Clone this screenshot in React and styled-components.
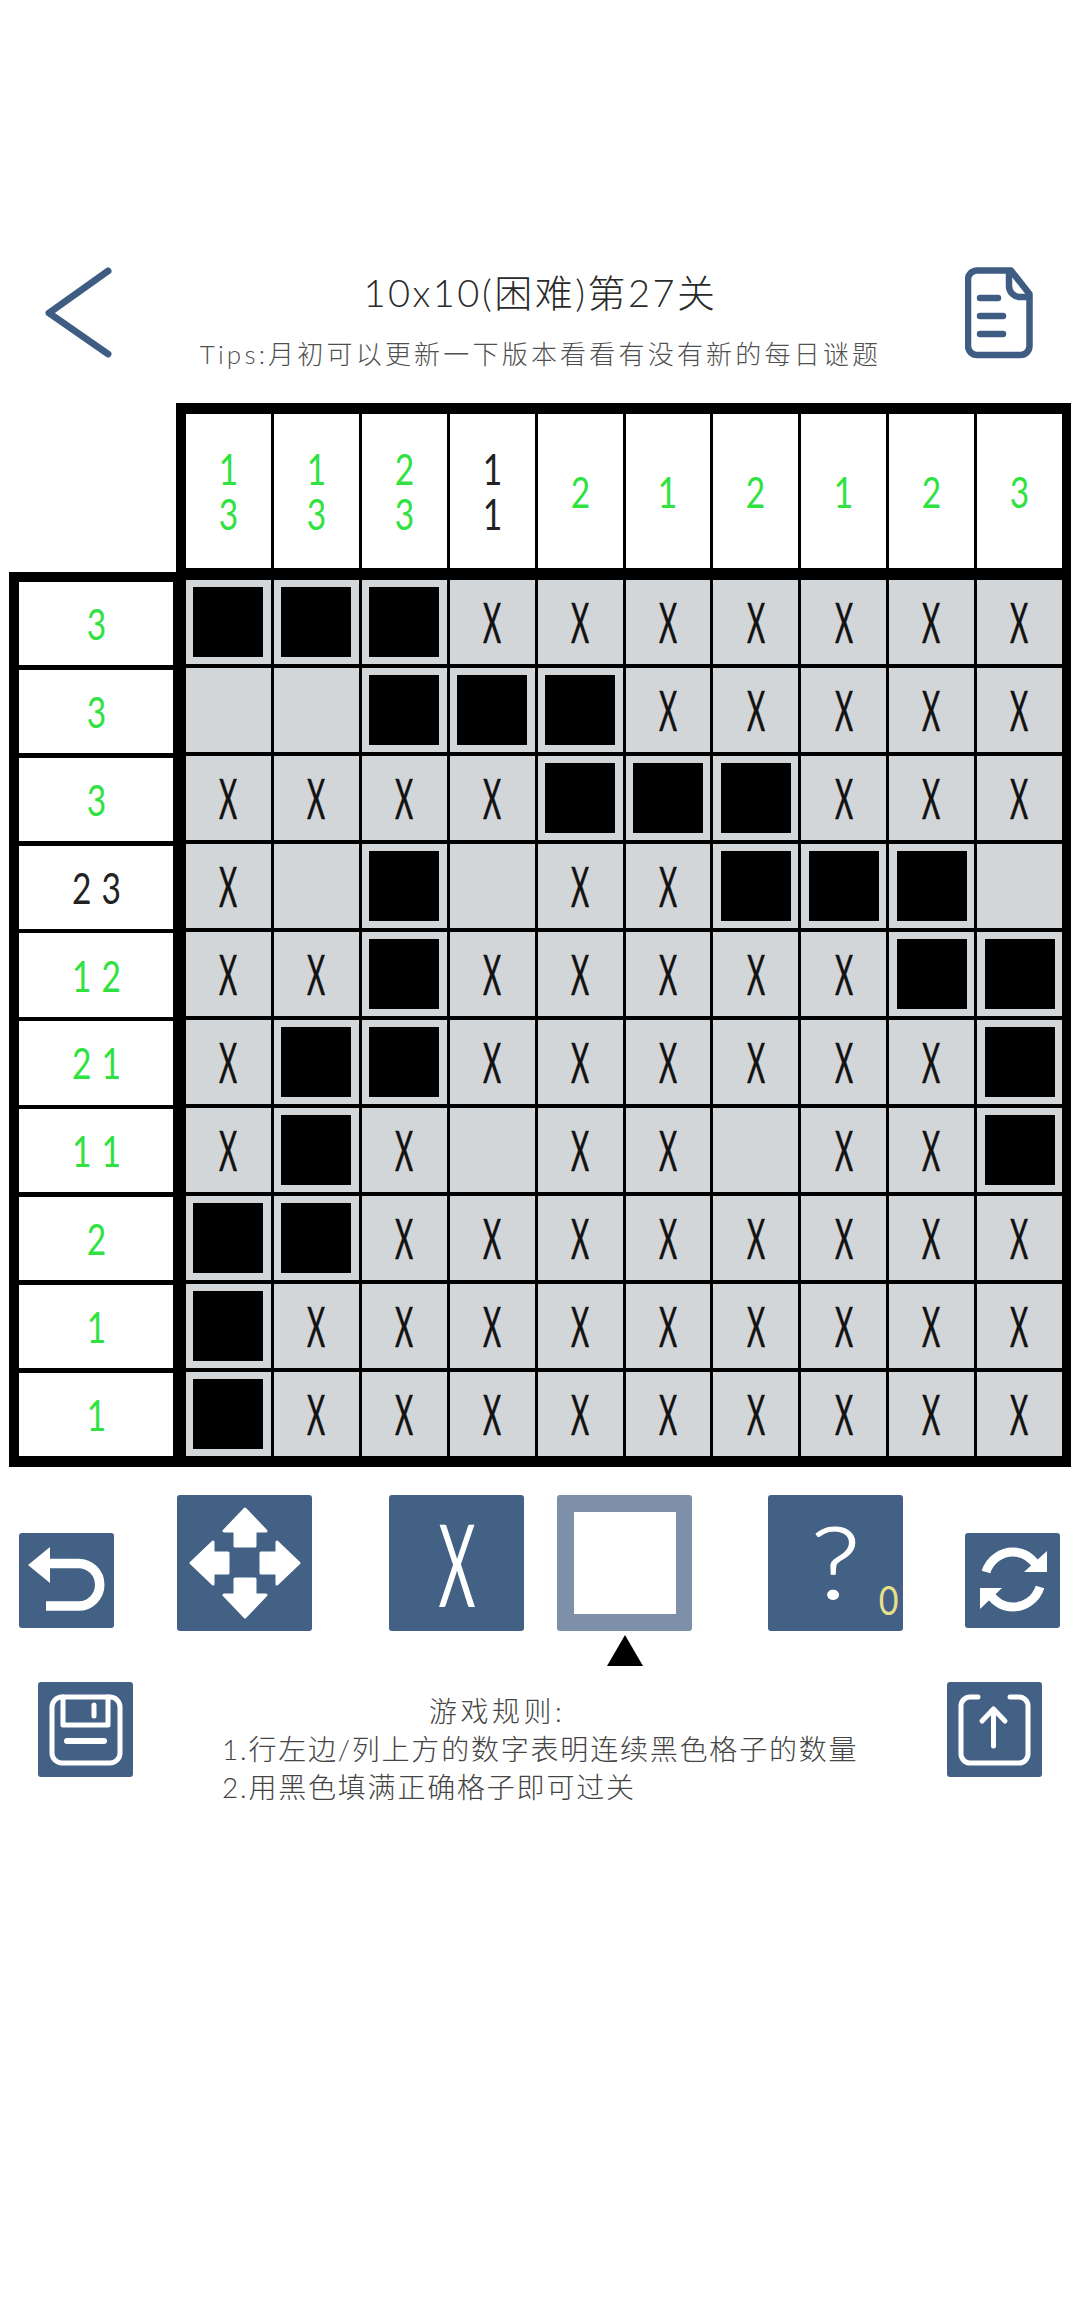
import React from "react";
import styled, { createGlobalStyle } from "styled-components";

const BLUE = "#436085";
const GREEN = "#2fe23f";
const LATIN = `"Lato", "Noto Sans", sans-serif`;
const HAND = `"Lato", "Noto Sans CJK SC", sans-serif`;

const topClues = [
  { nums: [1, 3], done: true },
  { nums: [1, 3], done: true },
  { nums: [2, 3], done: true },
  { nums: [1, 1], done: false },
  { nums: [2], done: true },
  { nums: [1], done: true },
  { nums: [2], done: true },
  { nums: [1], done: true },
  { nums: [2], done: true },
  { nums: [3], done: true },
];

const leftClues = [
  { text: "3", done: true },
  { text: "3", done: true },
  { text: "3", done: true },
  { text: "2 3", done: false },
  { text: "1 2", done: true },
  { text: "2 1", done: true },
  { text: "1 1", done: true },
  { text: "2", done: true },
  { text: "1", done: true },
  { text: "1", done: true },
];

const board = [
  "BBBXXXXXXX",
  "__BBBXXXXX",
  "XXXXBBBXXX",
  "X_B_XXBBB_",
  "XXBXXXXXBB",
  "XBBXXXXXXB",
  "XBX_XX_XXB",
  "BBXXXXXXXX",
  "BXXXXXXXXX",
  "BXXXXXXXXX",
];

const GlobalStyle = createGlobalStyle`
  html, body {
    margin: 0;
    padding: 0;
    background: #fff;
  }
`;

const Page = styled.div`
  width: 1080px;
  height: 2310px;
  padding-top: 267px;
  box-sizing: border-box;
  overflow: hidden;
`;

const Header = styled.header`
  height: 136px;
  display: flex;
  align-items: flex-start;
  padding: 0 47px 0 45px;
  box-sizing: border-box;
`;

const HeaderText = styled.div`
  flex: 1;
  padding-left: 4px;
  display: flex;
  flex-direction: column;
  align-items: center;
  color: #2a2a2a;
`;

const Title = styled.h1`
  margin: 0;
  height: 70px;
  font: 300 38px/50px ${HAND};
  letter-spacing: 2.5px;
  white-space: nowrap;
`;

const Tips = styled.div`
  font: 300 26px/34px ${HAND};
  letter-spacing: 3.2px;
  color: #505050;
  white-space: nowrap;
`;

const Board = styled.section`
  width: 1062px;
  margin-left: 9px;
`;

const TopClues = styled.div`
  margin-left: 167px;
  height: 169px;
  box-sizing: border-box;
  padding: 11px 9px 4px 10px;
  background: #000;
  display: grid;
  grid-template-columns: repeat(10, 1fr);
  column-gap: 3px;
`;

const TopCell = styled.div`
  background: #fff;
  display: flex;
  flex-direction: column;
  align-items: center;
  justify-content: center;
  color: ${(p) => (p.$done ? GREEN : "#222")};
  font: 400 43px/45px ${LATIN};
`;

const Digit = styled.span`
  display: block;
  transform: scaleX(0.78);
`;

const BoardBody = styled.div`
  display: flex;
  height: 895px;
`;

const LeftClues = styled.div`
  width: 177px;
  box-sizing: border-box;
  padding: 10px 13px 11px 10px;
  background: #000;
  display: grid;
  grid-template-rows: repeat(10, 1fr);
  row-gap: 4.4px;
`;

const LeftCell = styled.div`
  background: #fff;
  display: flex;
  align-items: center;
  justify-content: center;
  color: ${(p) => (p.$done ? GREEN : "#222")};
  font: 400 43px/1 ${LATIN};
  white-space: pre;
  word-spacing: 2px;
`;

const Grid = styled.div`
  flex: 1;
  box-sizing: border-box;
  padding: 8px 9px 11px 0;
  background: #000;
  display: grid;
  grid-template-columns: repeat(10, 1fr);
  grid-template-rows: repeat(10, 1fr);
  column-gap: 3px;
  row-gap: 4.4px;
`;

const Cell = styled.div`
  background: #d3d6d8;
  display: flex;
  align-items: center;
  justify-content: center;
`;

const Fill = styled.div`
  width: 70px;
  height: 70px;
  background: #000;
`;

const Cross = styled.span`
  display: block;
  font: 400 56px/1 ${LATIN};
  color: #111;
  -webkit-text-stroke: 0.6px #111;
  transform: scaleX(0.5);
`;

const Tools = styled.div`
  margin-top: 28px;
  padding-left: 19px;
  display: flex;
  align-items: flex-start;
`;

const Button = styled.div`
  position: relative;
  flex: none;
  width: ${(p) => (p.$big ? 135 : 95)}px;
  height: ${(p) => (p.$big ? 136 : 95)}px;
  margin-left: ${(p) => p.$left || 0}px;
  margin-top: ${(p) => p.$top || 0}px;
  background: ${BLUE};
  border-radius: 3px;
  display: flex;
  align-items: center;
  justify-content: center;
  color: #fff;

  svg {
    display: block;
  }
`;

const BigCross = styled.span`
  font: 400 114px/1 ${LATIN};
  transform: scaleX(0.5);
`;

const Question = styled.span`
  font: 300 100px/1 ${LATIN};
  -webkit-text-stroke: 1px #fff;
  transform: translateY(-3px) scaleX(1.15);
`;

const HintCount = styled.span`
  position: absolute;
  right: 3px;
  bottom: 11px;
  font: 400 40px/1 ${LATIN};
  color: #e8e08a;
  transform: scaleX(0.85);
`;

const Selected = styled.div`
  flex: none;
  margin-left: 33px;
  width: 135px;
  display: flex;
  flex-direction: column;
  align-items: center;
`;

const BlankButton = styled.div`
  width: 135px;
  height: 136px;
  border-radius: 3px;
  background: #7d8fa9;
  display: flex;
  align-items: center;
  justify-content: center;
`;

const BlankInner = styled.div`
  width: 102px;
  height: 102px;
  background: #fff;
`;

const Pointer = styled.div`
  margin-top: 4px;
  width: 0;
  height: 0;
  border-left: 18px solid transparent;
  border-right: 18px solid transparent;
  border-bottom: 31px solid #000;
`;

const Footer = styled.div`
  margin-top: 16px;
  padding: 0 38px;
  display: flex;
  align-items: flex-start;
`;

const Rules = styled.div`
  margin-left: 89px;
  padding-top: 10px;
  flex: 1;
  font: 300 28px/38px ${HAND};
  letter-spacing: 1.8px;
  color: #444;
  white-space: nowrap;
`;

const RulesTitle = styled.div`
  margin-left: 207px;
  letter-spacing: 3.5px;
`;

const BackIcon = () => (
  <svg width="67" height="91" viewBox="0 0 67 91" fill="none" stroke="#3f5d82" strokeWidth="7" strokeLinecap="round" strokeLinejoin="round">
    <polyline points="63,4 4,46 63,87" />
  </svg>
);

const DocIcon = () => (
  <svg width="68" height="92" viewBox="0 0 68 92" fill="none" stroke="#3f5d82" strokeWidth="6.5" strokeLinecap="round" strokeLinejoin="round">
    <path d="M12 3.5H46L64.5 27V79a9 9 0 0 1-9 9H12a9 9 0 0 1-9-9V12.5a9 9 0 0 1 9-9Z" />
    <path d="M44 4V19a11 11 0 0 0 11 11H64" />
    <path d="M15 31H33M15 49H38M15 67H38" />
  </svg>
);

const UndoIcon = () => (
  <svg width="95" height="95" viewBox="0 0 95 95" fill="none">
    <polygon points="9,32 31,14 31,50" fill="#fff" />
    <path d="M29 30.5H59.5A21.25 21.25 0 0 1 59.5 73H27" stroke="#fff" strokeWidth="9.5" />
  </svg>
);

const MoveIcon = () => (
  <svg width="135" height="136" viewBox="0 0 135 136" fill="#fff" stroke="#fff" strokeWidth="3" strokeLinejoin="round">
    <polygon points="68,14 47,36 58,36 58,51 78,51 78,36 89,36" />
    <polygon points="68,122 47,100 58,100 58,84 78,84 78,100 89,100" />
    <polygon points="14,68 36,47 36,58 51,58 51,78 36,78 36,89" />
    <polygon points="122,68 100,47 100,58 84,58 84,78 100,78 100,89" />
  </svg>
);

const RefreshIcon = () => (
  <svg width="95" height="95" viewBox="0 0 95 95">
    <g fill="none" stroke="#fff" strokeWidth="9">
      <path d="M21 39C25 26 37 19 48 19C58 19 66 24 72 33" />
      <path d="M75 54C71 67 59 74 48 74C38 74 30 69 24 60" />
    </g>
    <polygon points="82,18 82,39 59,39" fill="#fff" />
    <polygon points="15,76 15,55 37,55" fill="#fff" />
  </svg>
);

const SaveIcon = () => (
  <svg width="95" height="95" viewBox="0 0 95 95" fill="none" stroke="#fff" strokeWidth="5" strokeLinecap="round" strokeLinejoin="round">
    <rect x="14" y="15" width="68" height="66" rx="10" />
    <path d="M25 15V43H70V15" />
    <path d="M56 23V34" strokeWidth="5" />
    <path d="M29 59H66" strokeWidth="6" />
  </svg>
);

const UploadIcon = () => (
  <svg width="95" height="95" viewBox="0 0 95 95" fill="none" stroke="#fff" strokeWidth="5" strokeLinecap="round" strokeLinejoin="round">
    <path d="M31 15H23A9 9 0 0 0 14 24V72A9 9 0 0 0 23 81H72A9 9 0 0 0 81 72V24A9 9 0 0 0 72 15H63" />
    <path d="M46.5 64V28M35 39L46.5 27L58 39" />
  </svg>
);

export default function App() {
  return (
    <Page>
      <GlobalStyle />
      <Header>
        <BackIcon />
        <HeaderText>
          <Title>10x10(困难)第27关</Title>
          <Tips>Tips:月初可以更新一下版本看看有没有新的每日谜题</Tips>
        </HeaderText>
        <DocIcon />
      </Header>

      <Board>
        <TopClues>
          {topClues.map((clue, i) => (
            <TopCell key={i} $done={clue.done}>
              {clue.nums.map((n, j) => (
                <Digit key={j}>{n}</Digit>
              ))}
            </TopCell>
          ))}
        </TopClues>
        <BoardBody>
          <LeftClues>
            {leftClues.map((clue, i) => (
              <LeftCell key={i} $done={clue.done}>
                <Digit>{clue.text}</Digit>
              </LeftCell>
            ))}
          </LeftClues>
          <Grid>
            {board.join("").split("").map((c, i) => (
              <Cell key={i}>
                {c === "B" && <Fill />}
                {c === "X" && <Cross>X</Cross>}
              </Cell>
            ))}
          </Grid>
        </BoardBody>
      </Board>

      <Tools>
        <Button $top={38}>
          <UndoIcon />
        </Button>
        <Button $big $left={63}>
          <MoveIcon />
        </Button>
        <Button $big $left={77}>
          <BigCross>X</BigCross>
        </Button>
        <Selected>
          <BlankButton>
            <BlankInner />
          </BlankButton>
          <Pointer />
        </Selected>
        <Button $big $left={76}>
          <Question>?</Question>
          <HintCount>0</HintCount>
        </Button>
        <Button $top={38} $left={62}>
          <RefreshIcon />
        </Button>
      </Tools>

      <Footer>
        <Button>
          <SaveIcon />
        </Button>
        <Rules>
          <RulesTitle>游戏规则:</RulesTitle>
          <div>1.行左边/列上方的数字表明连续黑色格子的数量</div>
          <div>2.用黑色填满正确格子即可过关</div>
        </Rules>
        <Button>
          <UploadIcon />
        </Button>
      </Footer>
    </Page>
  );
}
